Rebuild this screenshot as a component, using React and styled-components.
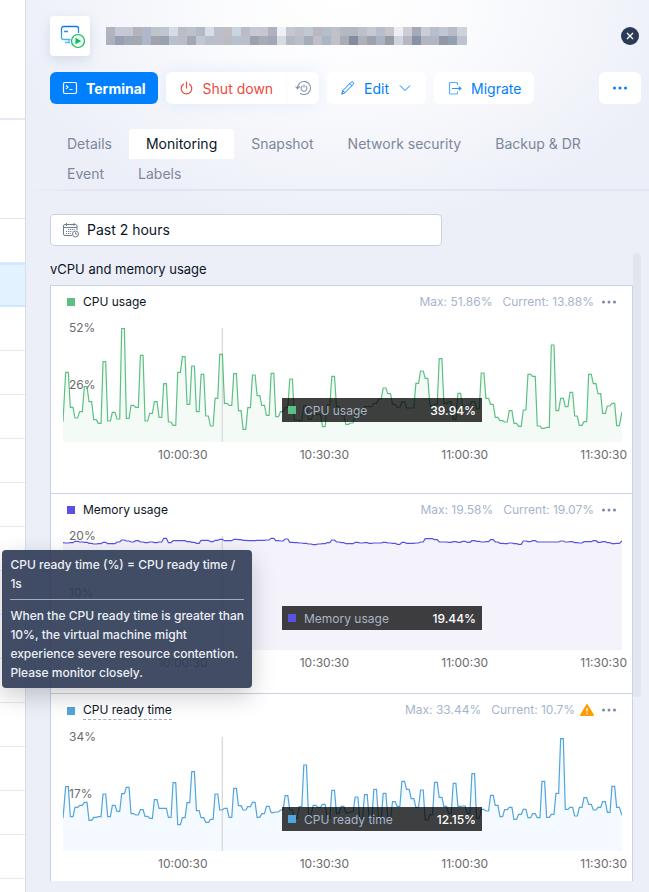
import styled, { createGlobalStyle } from "styled-components";

const GlobalStyle = createGlobalStyle`
  * {
    box-sizing: border-box;
  }

  body {
    margin: 0;
    background: #ffffff;
    color: #0b1526;
    font-family: Inter, "Liberation Sans", sans-serif;
    font-size: 14px;
  }

  button, select {
    font: inherit;
    color: inherit;
    border: 0;
    padding: 0;
    cursor: pointer;
  }

  h2, p {
    margin: 0;
  }

  svg {
    display: block;
    flex: none;
  }
`;

const Page = styled.div`
  display: grid;
  grid-template-columns: 25px 1fr;
  min-height: 100vh;
`;

const RowList = styled.div`
  display: flex;
  flex-direction: column;
`;

const ListHead = styled.div`
  height: 120px;
  border-bottom: 2px solid #e4eaf4;
`;

const ListFilter = styled.div`
  height: 99px;
  border-bottom: 1px solid #dfe4f0;
`;

const ListRow = styled.div`
  height: 44px;
  border-bottom: ${(p) => (p.$selected ? "2px solid #cfe7ff" : "1px solid #e4e9f3")};
  border-top: ${(p) => (p.$selected ? "2px solid #cfe7ff" : "0")};
  background: ${(p) => (p.$selected ? "#e3f2ff" : "#ffffff")};
`;

const Panel = styled.main`
  border-left: 1px solid #d6deed;
  background: radial-gradient(ellipse 350px 230px at 320px 0, #ffffff 0%, rgba(255, 255, 255, 0.8) 35%, rgba(255, 255, 255, 0) 100%), #eceff8;
  padding: 16px 8px 11px 24px;
`;

const Header = styled.header`
  display: flex;
  align-items: center;
  gap: 16px;
  padding-right: 2px;
`;

const VmIcon = styled.div`
  width: 40px;
  height: 40px;
  padding: 8px;
  border-radius: 4px;
  background: #ffffff;
  box-shadow: 0 4px 12px rgba(107, 128, 167, 0.2);
`;

const CloseButton = styled.button`
  display: grid;
  place-items: center;
  width: 18px;
  height: 18px;
  margin-left: auto;
  border-radius: 50%;
  background: #2b3a57;
`;

const Toolbar = styled.div`
  display: flex;
  gap: 8px;
  margin-top: 16px;
`;

const toneColors = {
  primary: "#ffffff",
  danger: "#f0483e",
  link: "#0080ff",
  muted: "#8592ad",
};

const ToolButton = styled.button`
  display: flex;
  align-items: center;
  justify-content: center;
  gap: 8px;
  height: 32px;
  padding: 0 ${(p) => (p.$tone === "primary" ? 12 : 13)}px;
  border-radius: 6px;
  background: ${(p) => (p.$tone === "primary" ? "#0080ff" : "#ffffff")};
  color: ${(p) => toneColors[p.$tone]};
  font-weight: ${(p) => (p.$tone === "primary" ? 700 : 400)};
  white-space: nowrap;
`;

const ButtonGroup = styled.div`
  display: flex;
  gap: 1px;
  border-radius: 6px;
  box-shadow: 0 0 16px rgba(0, 128, 255, 0.1);

  button:first-child {
    border-radius: 6px 0 0 6px;
  }

  button:last-child {
    width: 32px;
    padding: 0;
    border-radius: 0 6px 6px 0;
  }
`;

const MoreButton = styled(ToolButton)`
  margin-left: auto;
`;

const Tabs = styled.nav`
  display: flex;
  flex-wrap: wrap;
  margin: 25px -8px 0 -24px;
  padding: 0 24px;
  border-bottom: 2px solid;
  border-image: linear-gradient(to right, rgba(225, 229, 239, 0), #e1e5ef 60px) 1;
`;

const Tab = styled.button`
  height: 30px;
  padding: 0 17px 2px;
  border-radius: 4px 4px 0 0;
  background: ${(p) => (p.$active ? "#ffffff" : "transparent")};
  color: ${(p) => (p.$active ? "#0b1526" : "#7d879b")};
`;

const RangeField = styled.label`
  display: flex;
  align-items: center;
  gap: 8px;
  width: 392px;
  max-width: 100%;
  height: 32px;
  margin-top: 23px;
  padding: 0 12px;
  border: 1px solid #c8d3e6;
  border-radius: 4px;
  background: #ffffff;

  select {
    flex: 1;
    padding-bottom: 2px;
    appearance: none;
    background: transparent;
    outline: 0;
  }
`;

const ScrollArea = styled.div`
  display: grid;
  grid-template-columns: 1fr 8px;
  align-items: start;
  margin-top: 7px;
`;

const ScrollThumb = styled.div`
  height: 444px;
  border-radius: 4px;
  background: #e1e5ee;
`;

const SectionTitle = styled.h2`
  padding: 6px 0;
  font-size: 13px;
  font-weight: 400;
  line-height: 20px;
`;

const ChartList = styled.section`
  border: 1px solid #c8d3e6;
  border-bottom: 0;
  background: #ffffff;
`;

const ChartCard = styled.article`
  padding-bottom: ${(p) => p.$space}px;

  & + & {
    border-top: 1px solid #c8d3e6;
  }
`;

const ChartHead = styled.div`
  display: flex;
  align-items: flex-start;
  padding: 7px 15px 0 16px;
  font-size: 12px;
  line-height: 18px;
`;

const Swatch = styled.span`
  width: 8px;
  height: 8px;
  background: ${(p) => p.$color};
`;

const Legend = styled.div`
  display: flex;
  align-items: center;
  gap: 8px;
`;

const LegendName = styled.span`
  position: relative;
  border-bottom: ${(p) => (p.$hint ? "1px dashed #a0aec4" : "0")};
`;

const Stats = styled.div`
  display: flex;
  align-items: center;
  gap: 10px;
  height: 18px;
  margin-left: auto;
  color: #a6b5cc;
`;

const StatCurrent = styled.span`
  display: flex;
  align-items: center;
  gap: 5px;
`;

const DotsButton = styled.button`
  height: 18px;
  margin-left: 7px;
  background: transparent;
  color: #7c8aa5;
`;

const Plot = styled.div`
  position: relative;
  height: 114px;
  margin: 17px 10px 0 12px;

  svg {
    width: 100%;
    height: 114px;
  }
`;

const YAxis = styled.div`
  position: absolute;
  top: -9px;
  left: 6px;
  display: flex;
  flex-direction: column;
  gap: 39px;
  color: #6b6b6b;
  font-size: 12px;
  line-height: 18px;
`;

const XAxis = styled.div`
  display: flex;
  justify-content: space-between;
  margin-top: 4px;
  padding: 0 5px 0 107px;
  color: #6b6b6b;
  font-size: 12px;
  line-height: 18px;
`;

const PointTip = styled.div`
  position: absolute;
  top: 70px;
  left: 219px;
  display: flex;
  align-items: center;
  gap: 8px;
  width: 200px;
  height: 24px;
  padding: 0 6px;
  background: rgba(0, 0, 0, 0.75);
  color: #a9b4c9;
  font-size: 12px;

  strong {
    margin-left: auto;
    color: #ffffff;
    font-weight: 500;
  }
`;

const HintTip = styled.div`
  position: absolute;
  bottom: 31px;
  left: 50%;
  width: 250px;
  padding: 5px 8px 6px;
  border-radius: 4px;
  background: rgba(45, 58, 84, 0.9);
  box-shadow: 0 8px 24px rgba(0, 0, 0, 0.2);
  color: #ecf0f6;
  font-size: 12px;
  font-weight: 500;
  line-height: 19px;
  transform: translateX(-50%);

  p + p {
    margin-top: 6px;
    padding-top: 6px;
    border-top: 1px solid #a3abb8;
  }
`;

const nameBlocks = [
  "b0b4c0 c5c9d5 c3c8d3 b2b3bd adb9ca bec2ca c0c5d0 d6dce5 b9bdc8 bdc1ca b2b8c7 d6dde4 bbbfcb c0bec2 c9d4e1 babdc8 c7c8d1 c4c6d0 adb1c0 eef1f6 c6c7ce bec2cb c3c7d2 b8b8be b2becb c0c1c8 b3b8c3 b2b8c3 bdc0c9 c6c8d2 b6bdcc c6c5cb edeff5 cecdd3 a3aab8 cacdd6 b9bec8 c0c8d7 b9bcc8 cdd2dc",
  "afb1ba 97a0b3 a0a8b6 a3a8b3 acb8c9 a0a2ae 98a1b2 b8bfcd b9bdca a4a8b3 bfc9d4 b9bfca bbbfcd bdbcc2 b7c2d0 bbbfcb 9ba1ad a6abb7 a0a8b7 d7dbe4 b4b8c2 b9bfc9 a5adbb c1bfc5 a9b6c7 c0c1c8 a9abb7 838b9f adb0b9 9ba2ae aab3c4 979ba7 cfd5e0 b8b7bf 8791a7 b2b5bf b0b7c4 9297a3 93a0b2 bcc2ce",
].map((row) => row.split(" "));

const MaskedName = () => (
  <svg width="361" height="18" viewBox="0 0 361 18" shapeRendering="crispEdges" role="img" aria-label="Hidden name">
    {nameBlocks.map((row, y) =>
      row.map((color, x) => (
        <rect key={`${x}-${y}`} x={x * 9} y={y * 9} width={x === 39 ? 10 : 9} height="9" fill={`#${color}`} />
      ))
    )}
  </svg>
);

const MonitorIcon = () => (
  <svg width="30" height="26" viewBox="0 0 30 26" fill="none">
    <defs>
      <linearGradient id="screen" x1="0" y1="0" x2="0" y2="1">
        <stop offset="0" stopColor="#1273f5" />
        <stop offset="1" stopColor="#5bbcff" />
      </linearGradient>
    </defs>
    <path d="M12.5 15.5H5.5a2 2 0 0 1-2-2V4.5a2 2 0 0 1 2-2h13a2 2 0 0 1 2 2V9M7 18.5h5M11 16v2.5M6 7.5h4" stroke="url(#screen)" strokeWidth="1.3" />
    <circle cx="20" cy="17" r="6.5" fill="#e8f9f0" stroke="#12b962" strokeWidth="1.2" />
    <path d="M17.5 13.8v6.4l5.500-3.200z" fill="#12b962" />
  </svg>
);

const TerminalIcon = () => (
  <svg width="16" height="16" viewBox="0 0 16 16" fill="none" stroke="currentColor" strokeWidth="1.2">
    <rect x="1.5" y="2.5" width="13" height="11" rx="1.5" />
    <path d="M4 5.500l2 1.700-2 1.700M7.500 9.500h3" />
  </svg>
);

const PowerIcon = () => (
  <svg width="16" height="16" viewBox="0 0 16 16" fill="none" stroke="currentColor" strokeWidth="1.2" strokeLinecap="round">
    <path d="M4.500 4.200a5.300 5.300 0 1 0 6 0M7.500 2v6" />
  </svg>
);

const ForceOffIcon = () => (
  <svg width="18" height="18" viewBox="0 0 18 18" fill="none" stroke="currentColor" strokeWidth="1.1">
    <path d="M3.500 9a6.500 6.500 0 1 1 2.600 5.200M1.500 7.500l2 2.200 2.200-2.200" />
    <path d="M8.500 6.900a2.900 2.900 0 1 0 3 0M10 5.500v3" />
  </svg>
);

const EditIcon = () => (
  <svg width="16" height="16" viewBox="0 0 16 16" fill="none" stroke="currentColor" strokeLinejoin="round">
    <path d="M1.800 14.200l1-3.600 8.300-8.300c.6-.6 1.500-.6 2.100 0 .6.600.6 1.500 0 2.100l-8.300 8.300zM9.800 3.600l2.200 2.200M2.800 10.600l2.100 2.100" />
  </svg>
);

const ChevronIcon = () => (
  <svg width="16" height="16" viewBox="0 0 16 16" fill="none" stroke="currentColor">
    <path d="M3 5.500l5 5 5-5" />
  </svg>
);

const MigrateIcon = () => (
  <svg width="16" height="16" viewBox="0 0 16 16" fill="none">
    <path d="M10.500 5V3.500a1 1 0 0 0-1-1H3.500a1 1 0 0 0-1 1v9.500a1 1 0 0 0 1 1h6a1 1 0 0 0 1-1v-1.500" stroke="#55aeff" strokeWidth="1.2" />
    <path d="M5 8.500h7" stroke="#2a93ff" />
    <path d="M11.800 6l3 2.500-3 2.500z" fill="#2a93ff" />
  </svg>
);

const DotsIcon = () => (
  <svg width="16" height="16" viewBox="0 0 16 16" fill="currentColor">
    <circle cx="2.500" cy="8" r="1.500" />
    <circle cx="8" cy="8" r="1.500" />
    <circle cx="13.500" cy="8" r="1.500" />
  </svg>
);

const CalendarIcon = () => (
  <svg width="16" height="16" viewBox="0 0 16 16" fill="none" stroke="#6f7a90">
    <path d="M9 13.500H2A1.500 1.500 0 0 1 .500 12V4A1.500 1.500 0 0 1 2 2.500h10.500A1.500 1.500 0 0 1 14 4v4M.500 5.500H14M3.500 1v3M11 1v3" />
    <path d="M5 7.500h7M3 9.500h6.500M3 11.500h5" strokeDasharray="1.200 0.900" />
    <circle cx="12.500" cy="12" r="3" />
    <path d="M12.500 10.300V12H14" />
  </svg>
);

const WarningIcon = () => (
  <svg width="14" height="12" viewBox="0 0 14 12" role="img" aria-label="Warning">
    <path d="M6.300.4a.8.800 0 0 1 1.400 0l6.200 10.400a.8.800 0 0 1-.7 1.200H.8a.8.800 0 0 1-.7-1.200z" fill="#ff9b05" />
    <path d="M7 4v3.600M7 8.800v1.400" stroke="#fff0d9" strokeWidth="1.5" />
  </svg>
);

// One sample per minute, counted downwards from the same origin as `top`.
const charts = [
  {
    name: "CPU usage",
    color: "#5cc083",
    fill: "#f4fbf7",
    max: "51.86%",
    current: "13.88%",
    value: "39.94%",
    ticks: ["52%", "26%"],
    space: 29,
    top: 39,
    samples: [
      320, 172, 277, 309, 290, 215, 260, 314, 325, 140, 318, 292, 312, 40, 310, 271, 277, 121, 318, 295,
      260, 307, 206, 321, 331, 172, 125, 268, 153, 290, 178, 303, 333, 250, 118, 265, 271, 176, 287, 343,
      278, 180, 242, 271, 301, 175, 305, 290, 278, 192, 315, 317, 272, 313, 298, 298, 335, 270, 184, 275,
      300, 328, 324, 290, 300, 275, 275, 265, 252, 219, 236, 268, 277, 260, 279, 279, 205, 168, 190, 272,
      268, 131, 265, 260, 313, 235, 275, 270, 260, 281, 174, 250, 268, 307, 317, 321, 287, 325, 334, 285,
      178, 184, 333, 340, 337, 90, 287, 250, 275, 232, 303, 331, 320, 178, 206, 236, 295, 273, 265, 332,
      290,
    ],
  },
  {
    name: "Memory usage",
    color: "#5a52de",
    fill: "#f4f3fc",
    max: "19.58%",
    current: "19.07%",
    value: "19.44%",
    ticks: ["20%", "10%"],
    space: 21,
    top: 168,
    samples: [
      188, 189, 188, 184, 186, 187, 190, 192, 191, 187, 191, 191, 186, 180, 183, 186, 182, 186, 188, 186,
      188, 186, 175, 188, 182, 182, 182, 185, 187, 190, 181, 181, 185, 181, 178, 182, 182, 178, 179, 181,
      182, 182, 181, 181, 180, 175, 182, 183, 177, 187, 188, 189, 190, 192, 194, 192, 191, 188, 180, 186,
      188, 191, 191, 187, 189, 188, 190, 189, 189, 187, 189, 190, 193, 187, 190, 190, 189, 186, 176, 176,
      179, 186, 186, 187, 185, 187, 184, 187, 182, 184, 186, 185, 179, 186, 190, 191, 189, 191, 193, 183,
      185, 182, 186, 186, 186, 186, 186, 183, 186, 185, 188, 189, 185, 185, 182, 187, 185, 188, 191, 190,
      183,
    ],
  },
  {
    name: "CPU ready time",
    color: "#51a5dc",
    fill: "#f4faff",
    max: "33.44%",
    current: "10.7%",
    value: "12.15%",
    ticks: ["34%", "17%"],
    space: 8,
    top: 141,
    warning: true,
    samples: [
      385, 290, 380, 352, 346, 337, 391, 382, 380, 312, 380, 346, 364, 311, 292, 371, 375, 359, 379, 385,
      329, 355, 355, 382, 278, 404, 383, 338, 245, 362, 383, 397, 388, 312, 360, 355, 382, 295, 347, 360,
      350, 337, 382, 371, 349, 368, 366, 360, 317, 360, 385, 350, 225, 375, 346, 352, 343, 385, 301, 370,
      349, 368, 366, 321, 385, 314, 385, 298, 390, 310, 385, 335, 349, 274, 298, 326, 352, 300, 390, 374,
      277, 322, 349, 370, 280, 349, 348, 370, 251, 385, 358, 363, 316, 346, 380, 359, 352, 388, 373, 358,
      383, 371, 383, 274, 382, 373, 310, 146, 358, 352, 378, 352, 323, 343, 360, 352, 335, 367, 289, 352,
      376,
    ],
  },
];

const times = ["10:00:30", "10:30:30", "11:00:30", "11:30:30"];

// Every sample is held for a moment before the line moves to the next one.
const buildLine = (samples, top) =>
  samples
    .map((y, i) => {
      const x = i * 14 - 2;
      if (i === 0) return `M0 ${y - top}`;
      if (i === samples.length - 1) return `L${x - 2} ${y - top}`;
      return `L${x - 4} ${y - top}H${x + 4}`;
    })
    .join("");

const Chart = ({ name, color, fill, max, current, value, ticks, space, top, samples, warning }) => {
  const line = buildLine(samples, top);
  return (
    <ChartCard $space={space}>
      <ChartHead>
        <Legend>
          <Swatch $color={color} />
          <LegendName $hint={warning}>
            {name}
            {warning && (
              <HintTip role="tooltip">
                <p>CPU ready time (%) = CPU ready time / 1s</p>
                <p>
                  When the CPU ready time is greater than 10%, the virtual machine might experience severe
                  resource contention. Please monitor closely.
                </p>
              </HintTip>
            )}
          </LegendName>
        </Legend>
        <Stats>
          <span>Max: {max}</span>
          <StatCurrent>
            Current: {current}
            {warning && <WarningIcon />}
          </StatCurrent>
        </Stats>
        <DotsButton aria-label={`${name} options`}>
          <DotsIcon />
        </DotsButton>
      </ChartHead>
      <Plot>
        <svg viewBox="0 0 1676 342" preserveAspectRatio="none">
          <path d={`${line}V342H0Z`} fill={fill} />
          <path d="M477.5 0V342" stroke="#cfcfcf" vectorEffect="non-scaling-stroke" />
          <path d={line} fill="none" stroke={color} strokeWidth="1.2" vectorEffect="non-scaling-stroke" />
        </svg>
        <YAxis>
          {ticks.map((tick) => (
            <span key={tick}>{tick}</span>
          ))}
        </YAxis>
        <PointTip>
          <Swatch $color={color} />
          {name}
          <strong>{value}</strong>
        </PointTip>
      </Plot>
      <XAxis>
        {times.map((time) => (
          <span key={time}>{time}</span>
        ))}
      </XAxis>
    </ChartCard>
  );
};

const tabs = ["Details", "Monitoring", "Snapshot", "Network security", "Backup & DR", "Event", "Labels"];

const App = () => {
  return (
    <>
      <GlobalStyle />
      <Page>
        <RowList>
          <ListHead />
          <ListFilter />
          {Array.from({ length: 15 }, (_, i) => (
            <ListRow key={i} $selected={i === 1} />
          ))}
        </RowList>
        <Panel>
          <Header>
            <VmIcon>
              <MonitorIcon />
            </VmIcon>
            <MaskedName />
            <CloseButton aria-label="Close">
              <svg width="8" height="8" viewBox="0 0 8 8" stroke="#ffffff" strokeWidth="1.3">
                <path d="M1 1l6 6M7 1L1 7" />
              </svg>
            </CloseButton>
          </Header>
          <Toolbar>
            <ToolButton $tone="primary">
              <TerminalIcon />
              Terminal
            </ToolButton>
            <ButtonGroup>
              <ToolButton $tone="danger">
                <PowerIcon />
                Shut down
              </ToolButton>
              <ToolButton $tone="muted" aria-label="Force shut down">
                <ForceOffIcon />
              </ToolButton>
            </ButtonGroup>
            <ToolButton $tone="link">
              <EditIcon />
              Edit
              <ChevronIcon />
            </ToolButton>
            <ToolButton $tone="link">
              <MigrateIcon />
              Migrate
            </ToolButton>
            <MoreButton $tone="link" aria-label="More actions">
              <DotsIcon />
            </MoreButton>
          </Toolbar>
          <Tabs>
            {tabs.map((tab) => (
              <Tab key={tab} $active={tab === "Monitoring"}>
                {tab}
              </Tab>
            ))}
          </Tabs>
          <RangeField>
            <CalendarIcon />
            <select aria-label="Time range">
              <option>Past 2 hours</option>
            </select>
          </RangeField>
          <ScrollArea>
            <div>
              <SectionTitle>vCPU and memory usage</SectionTitle>
              <ChartList>
                {charts.map((chart) => (
                  <Chart key={chart.name} {...chart} />
                ))}
              </ChartList>
            </div>
            <ScrollThumb />
          </ScrollArea>
        </Panel>
      </Page>
    </>
  );
};

export default App;
